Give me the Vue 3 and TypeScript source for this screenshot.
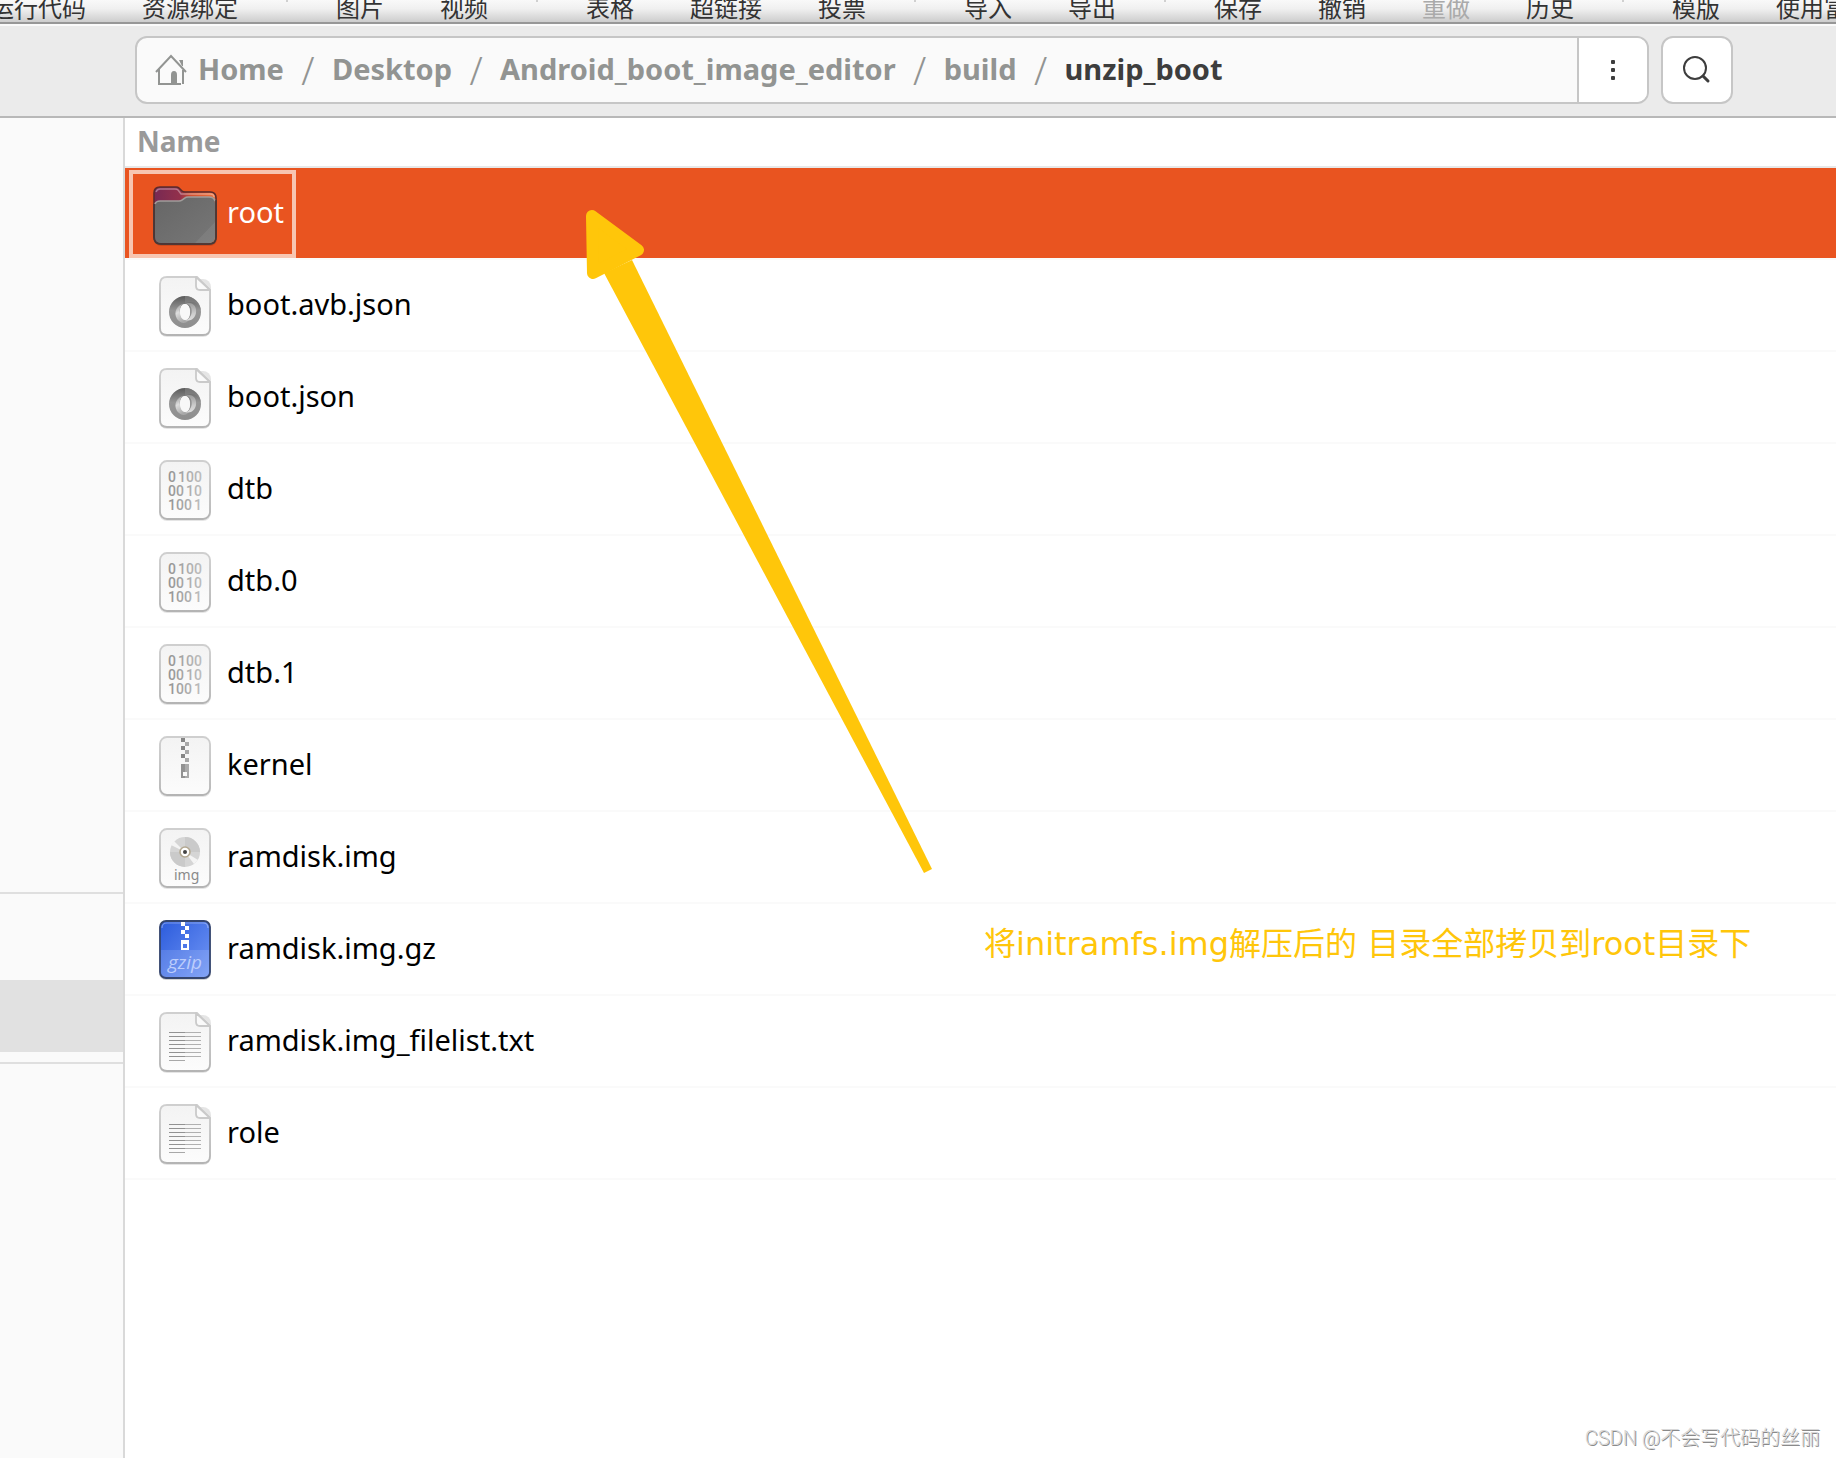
<script setup lang="ts">
type IconKind = 'folder' | 'json' | 'binary' | 'zip' | 'disc' | 'gzip' | 'text'

interface Tool {
  label: string
  disabled?: boolean
}

interface FileEntry {
  name: string
  icon: IconKind
  selected?: boolean
}

const toolGroups: Tool[][] = [
  [{ label: '运行代码' }, { label: '资源绑定' }],
  [{ label: '图片' }, { label: '视频' }],
  [{ label: '表格' }, { label: '超链接' }, { label: '投票' }],
  [{ label: '导入' }, { label: '导出' }],
  [{ label: '保存' }, { label: '撤销' }, { label: '重做', disabled: true }, { label: '历史' }],
  [{ label: '模版' }, { label: '使用富' }],
]

const crumbs: string[] = ['Home', 'Desktop', 'Android_boot_image_editor', 'build', 'unzip_boot']

const files: FileEntry[] = [
  { name: 'root', icon: 'folder', selected: true },
  { name: 'boot.avb.json', icon: 'json' },
  { name: 'boot.json', icon: 'json' },
  { name: 'dtb', icon: 'binary' },
  { name: 'dtb.0', icon: 'binary' },
  { name: 'dtb.1', icon: 'binary' },
  { name: 'kernel', icon: 'zip' },
  { name: 'ramdisk.img', icon: 'disc' },
  { name: 'ramdisk.img.gz', icon: 'gzip' },
  { name: 'ramdisk.img_filelist.txt', icon: 'text' },
  { name: 'role', icon: 'text' },
]

const hasFold = (kind: IconKind): boolean => kind === 'json' || kind === 'text'
const textLines: number[] = [22, 26, 30, 34, 38, 42, 46]
</script>

<template>
  <div class="page">
    <svg class="defs" width="0" height="0" aria-hidden="true">
      <defs>
        <linearGradient id="paper" x1="0" y1="0" x2="0" y2="1">
          <stop offset="0" stop-color="#f3f3f3" />
          <stop offset="1" stop-color="#fcfcfc" />
        </linearGradient>
        <linearGradient id="paper-edge" x1="0" y1="0" x2="0" y2="1">
          <stop offset="0" stop-color="#cfcfcf" />
          <stop offset="1" stop-color="#b4b4b4" />
        </linearGradient>
        <linearGradient id="digits" gradientUnits="userSpaceOnUse" x1="16" y1="0" x2="48" y2="0">
          <stop offset="0" stop-color="#949494" />
          <stop offset="1" stop-color="#bdbdbd" />
        </linearGradient>
        <linearGradient id="swirl-dark" x1="0" y1="0" x2="0" y2="1">
          <stop offset="0" stop-color="#5a5a5a" />
          <stop offset="0.45" stop-color="#969696" />
          <stop offset="1" stop-color="#8e8e8e" />
        </linearGradient>
        <linearGradient id="swirl-left" x1="0" y1="0" x2="0.4" y2="1">
          <stop offset="0" stop-color="#8e8e8e" />
          <stop offset="0.45" stop-color="#dedede" />
          <stop offset="1" stop-color="#a8a8a8" />
        </linearGradient>
        <linearGradient id="swirl-right" x1="0" y1="0" x2="0" y2="1">
          <stop offset="0" stop-color="#9c9c9c" />
          <stop offset="0.6" stop-color="#cdcdcd" />
          <stop offset="1" stop-color="#dedede" />
        </linearGradient>
        <linearGradient id="blue" x1="0" y1="0" x2="1" y2="1">
          <stop offset="0" stop-color="#2b5bdc" />
          <stop offset="1" stop-color="#7398f6" />
        </linearGradient>
        <linearGradient id="folder-back" x1="0" y1="0" x2="1" y2="0">
          <stop offset="0" stop-color="#772953" />
          <stop offset="0.42" stop-color="#93304b" />
          <stop offset="0.6" stop-color="#d2502f" />
          <stop offset="1" stop-color="#f0743f" />
        </linearGradient>
        <linearGradient id="folder-front" x1="0" y1="0" x2="1" y2="1">
          <stop offset="0" stop-color="#666" />
          <stop offset="1" stop-color="#777" />
        </linearGradient>
      </defs>
    </svg>

    <nav class="toolbar" aria-label="Editor">
      <div v-for="(group, g) in toolGroups" :key="g" class="tool-group">
        <button
          v-for="tool in group"
          :key="tool.label"
          type="button"
          class="tool"
          :disabled="tool.disabled"
        >{{ tool.label }}</button>
      </div>
    </nav>

    <header class="header">
      <div class="pathbar">
        <nav class="crumbs" aria-label="Path">
          <svg class="home" viewBox="0 0 32 32" width="32" height="32" aria-hidden="true">
            <path d="M1 18 16 2l15 16M4 15v15h22M28 16v14" fill="none" stroke="#929492" stroke-width="2" />
            <path d="M16 30V21q0-4 3-4t3 4v9zM24 6h4v6h-1z" fill="#929492" />
          </svg>
          <template v-for="(crumb, i) in crumbs" :key="crumb">
            <span v-if="i" class="slash">/</span>
            <a href="#" class="crumb" :class="{ current: i === crumbs.length - 1 }">{{ crumb }}</a>
          </template>
        </nav>
        <button type="button" class="more" aria-label="Menu">
          <svg viewBox="0 0 32 32" width="32" height="32" aria-hidden="true">
            <g fill="#3d3d3d">
              <rect x="14" y="6" width="4" height="4" rx="1" />
              <rect x="14" y="14" width="4" height="4" rx="1" />
              <rect x="14" y="22" width="4" height="4" rx="1" />
            </g>
          </svg>
        </button>
      </div>
      <button type="button" class="search" aria-label="Search">
        <svg viewBox="0 0 32 32" width="32" height="32" aria-hidden="true">
          <circle cx="14" cy="14" r="11" fill="none" stroke="#3d3d3d" stroke-width="2" />
          <path d="m22 22 5 5" stroke="#3d3d3d" stroke-width="3" stroke-linecap="round" />
        </svg>
      </button>
    </header>

    <div class="body">
      <aside class="sidebar">
        <div class="side-top"></div>
        <div class="side-mid"><div class="side-active"></div></div>
      </aside>

      <main class="content">
        <table class="files">
          <thead>
            <tr><th scope="col">Name</th></tr>
          </thead>
          <tbody>
            <tr v-for="file in files" :key="file.name" :class="{ selected: file.selected }">
              <td>
                <div class="entry">
                  <svg class="icon" viewBox="0 0 64 64" width="64" height="64" aria-hidden="true">
                    <template v-if="file.icon === 'folder'">
                      <rect x="1" y="9" width="63" height="55" rx="7" fill="#000" opacity="0.12" />
                      <path d="M1 11q0-6 6-6h16q2 0 3 1l3 3q1 1 3 1h25q6 0 6 6v39q0 7-7 7H8q-7 0-7-7z" fill="url(#folder-back)" stroke="#5b2b2c" stroke-width="1.6" />
                      <path d="M3 10q1-3 4-3h15q2 0 3 1l3 4h29q4 0 4 3" fill="none" stroke="#fff" stroke-opacity="0.35" stroke-width="1.4" />
                      <path d="M2 24q0-5 5-5h19q2 0 3-1l3-2q1-1 3-1h21q6 0 6 6v34q0 6-6 6H8q-6 0-6-6z" fill="url(#folder-front)" />
                      <path d="M62 40v15q0 6-6 6H42z" fill="#fff" opacity="0.07" />
                      <path d="M2 22q1-3 5-3h19q2 0 3-1l3-2q1-1 3-1h21q5 0 6 4" fill="none" stroke="#a09c9a" stroke-width="1.6" />
                      <path d="M1 22v33q0 7 7 7h48q7 0 7-7V18" fill="none" stroke="#473a38" stroke-width="1.6" />
                    </template>

                    <template v-else-if="file.icon === 'gzip'">
                      <rect x="6" y="4" width="52" height="58" rx="7" fill="#000" opacity="0.18" />
                      <rect x="7" y="3" width="50" height="57" rx="6" fill="url(#blue)" stroke="#34456f" stroke-width="1.8" />
                      <path d="M8 32h48v22q0 5-5 5H13q-5 0-5-5z" fill="#fff" opacity="0.13" />
                      <path d="M9 10q0-5 5-5h36q5 0 5 5" fill="none" stroke="#fff" stroke-opacity="0.35" stroke-width="1.2" />
                      <path d="M28 4h4v4h-4zM32 8h4v4h-4zM28 12h4v4h-4zM32 16h4v4h-4z" fill="#fff" />
                      <path d="M28 22h8v10h-8zM30 26v4h4v-4z" fill="#fff" fill-rule="evenodd" />
                      <text x="15" y="51" class="gzip-label">gzip</text>
                    </template>

                    <template v-else>
                      <rect x="6" y="5" width="52" height="58" rx="8" fill="#000" opacity="0.1" />
                      <path v-if="hasFold(file.icon)" d="M14 3h30l13 13v38q0 7-7 7H14q-7 0-7-7V10q0-7 7-7z" fill="url(#paper)" stroke="url(#paper-edge)" stroke-width="1.8" />
                      <path v-if="hasFold(file.icon)" d="M43 3v9q0 4 4 4h10z" fill="#fafafa" stroke="#cacaca" stroke-width="1.8" stroke-linejoin="round" />
                      <rect v-if="!hasFold(file.icon)" x="7" y="3" width="50" height="58" rx="7" fill="url(#paper)" stroke="url(#paper-edge)" stroke-width="1.8" />

                      <template v-if="file.icon === 'json'">
                        <path d="M32 22a16 16 0 1 0 0 32a16 16 0 1 0 0-32zM32 30c3 0 5 3 5 8s-2 8-5 8s-5-3-5-8s2-8 5-8z" fill="url(#swirl-dark)" fill-rule="evenodd" />
                        <path d="M32 30c-4 0-6 4-5 9s4 8 9 7c-4 5-9 3-12-1c-4-7 0-15 8-15z" fill="url(#swirl-left)" />
                        <path d="M32 30c6-1 9 7 5 13c-1 2-3 3-5 3c6 2 10-2 11-7c1-7-4-12-11-9z" fill="url(#swirl-right)" />
                        <path d="M32 22a16 16 0 0 1 16 15c-3-9-9-11-16-7z" fill="#858585" opacity="0.6" />
                        <ellipse cx="32" cy="38" rx="5" ry="8" fill="#f8f8f8" />
                      </template>

                      <g v-else-if="file.icon === 'binary'" class="digits" fill="url(#digits)">
                        <text x="15 25 33 41" y="24">0100</text>
                        <text x="15 23 33 41" y="38">0010</text>
                        <text x="15 23 31 41" y="52">1001</text>
                      </g>

                      <template v-else-if="file.icon === 'zip'">
                        <path d="M28 4h4v4h-4zM28 12h4v4h-4zM28 20h4v4h-4z" fill="#858585" />
                        <path d="M32 8h4v4h-4zM32 16h4v4h-4zM32 24h4v4h-4z" fill="#a8a8a8" />
                        <path d="M28 30h4v14h-4z" fill="#929292" />
                        <path d="M32 30h4v14h-4z" fill="#ababab" />
                        <rect x="30" y="38" width="4" height="4" fill="#fafafa" />
                      </template>

                      <template v-else-if="file.icon === 'disc'">
                        <circle cx="32" cy="26" r="15" fill="#d5d5d5" />
                        <path d="M32 11a15 15 0 0 1 15 15H32zM32 26v15a15 15 0 0 1-15-15z" fill="#cacaca" />
                        <path d="m32 26-14-7 3-4zM32 26l13 8-4 4z" fill="#f4f4f4" />
                        <circle cx="32" cy="26" r="5" fill="#fff" stroke="#b3a891" stroke-width="1.6" />
                        <circle cx="32" cy="26" r="2" fill="#444" />
                        <text x="21" y="54" class="img-label">img</text>
                      </template>

                      <template v-else>
                        <path v-for="y in textLines" :key="y" :d="`M16 ${y}.5h16`" stroke="#929292" />
                        <path v-for="y in textLines" :key="`r${y}`" :d="`M32 ${y}.5h16`" stroke="#b0b0b0" />
                        <path d="M16 50.5h16" stroke="#a8a8a8" />
                      </template>
                    </template>
                  </svg>
                  <span class="name">{{ file.name }}</span>
                </div>
              </td>
            </tr>
          </tbody>
        </table>
      </main>
    </div>

    <svg class="arrow" viewBox="0 0 348 664" width="348" height="664" aria-hidden="true">
      <path d="M6 6 52 40 7 63z" fill="#ffc60a" stroke="#ffc60a" stroke-width="12" stroke-linejoin="round" />
      <path d="M46 50 346 659l-8 4L18 63z" fill="#ffc60a" />
    </svg>
    <p class="note">将initramfs.img解压后的 目录全部拷贝到root目录下</p>
    <p class="watermark">CSDN @不会写代码的丝丽</p>
  </div>
</template>

<style>
body {
  margin: 0;
}
</style>

<style scoped>
.page {
  position: relative;
  display: flex;
  flex-direction: column;
  min-height: 100vh;
  overflow: hidden;
  background: #fff;
  font-family: "Noto Sans", "Noto Sans CJK SC", sans-serif;
}

.defs {
  position: absolute;
}

button {
  margin: 0;
  padding: 0;
  border: 0;
  background: none;
  font: inherit;
  color: inherit;
}

.toolbar {
  display: flex;
  align-items: flex-end;
  height: 22px;
  overflow: hidden;
  border-bottom: 2px solid #979797;
  background: linear-gradient(#f9f9f9, #f0f0f0 40%, #cdcdcd);
}

.tool-group {
  display: flex;
  flex: none;
}

.tool-group:first-child {
  margin-left: -38px;
}

.tool-group + .tool-group::before {
  content: "";
  width: 2px;
  height: 10px;
  margin: 0 20px;
  background: #d0d0d0;
}

.tool {
  flex: none;
  padding: 0 28px;
  font-family: "Noto Sans CJK SC", sans-serif;
  font-size: 24px;
  line-height: 30px;
  color: #333;
}

.tool:disabled {
  color: #aaa;
}

.header {
  display: flex;
  gap: 12px;
  padding: 10px 103px 12px 135px;
  border-top: 2px solid #fafafa;
  border-bottom: 2px solid #b8b8b8;
  background: #ebebeb;
}

.pathbar {
  display: flex;
  flex: 1;
  min-width: 0;
  box-sizing: border-box;
  height: 68px;
  overflow: hidden;
  border: 2px solid #c6c6c6;
  border-radius: 12px;
  background: #fafafa;
}

.crumbs {
  display: flex;
  flex: 1;
  align-items: center;
  min-width: 0;
  padding-left: 18px;
  font-size: 29px;
  font-weight: 700;
  line-height: 40px;
  white-space: nowrap;
}

.home {
  flex: none;
  margin-right: 11px;
}

.crumb {
  padding-bottom: 2px;
  color: #929492;
  text-decoration: none;
}

.crumb.current {
  color: #3d3d3d;
}

.slash {
  width: 48px;
  font-size: 38px;
  font-weight: 300;
  text-align: center;
  color: #929492;
}

.more {
  display: grid;
  place-items: center;
  flex: none;
  width: 70px;
  border-left: 2px solid #c6c6c6;
  background: #fff;
}

.search {
  display: grid;
  place-items: center;
  flex: none;
  box-sizing: border-box;
  width: 72px;
  height: 68px;
  border: 2px solid #c6c6c6;
  border-radius: 12px;
  background: #fff;
}

.body {
  display: flex;
  flex: 1;
}

.sidebar {
  flex: none;
  width: 123px;
  border-right: 2px solid #d9d9d9;
  background: #fafafa;
}

.side-top {
  height: 774px;
  border-bottom: 2px solid #dfdfdf;
}

.side-mid {
  padding: 86px 0 10px;
  border-bottom: 2px solid #dfdfdf;
}

.side-active {
  height: 72px;
  background: #e1e1e1;
}

.content {
  flex: 1;
  min-width: 0;
}

.files {
  width: 100%;
  border-collapse: separate;
  border-spacing: 0;
}

th {
  height: 46px;
  padding: 0 12px 2px;
  border-bottom: 2px solid #e8e8e8;
  font-size: 28px;
  font-weight: 700;
  line-height: 40px;
  text-align: left;
  color: #9a9a9a;
}

td {
  height: 90px;
  padding: 0 4px;
  border-bottom: 2px solid #fafafa;
  font-size: 29px;
  line-height: 40px;
  color: #000;
}

.selected td {
  background: #e95420;
  background-clip: padding-box;
  color: #fff;
}

.entry {
  display: flex;
  align-items: center;
  gap: 10px;
  box-sizing: border-box;
  width: fit-content;
  height: 88px;
  margin-top: 2px;
  padding: 0 8px 0 20px;
  border: 4px solid transparent;
}

.selected .entry {
  border-color: #f7c5b1;
}

.icon {
  flex: none;
}

.name {
  padding-bottom: 4px;
}

.digits {
  font: 500 14px Roboto, sans-serif;
}

.img-label {
  font: 14px "Noto Sans", sans-serif;
  fill: #8a8a8a;
}

.gzip-label {
  font: italic 19px "Open Sans", sans-serif;
  fill: #bccdfc;
}

.arrow {
  position: absolute;
  top: 210px;
  left: 586px;
  pointer-events: none;
}

.note {
  position: absolute;
  top: 924px;
  left: 984px;
  margin: 0;
  font-family: "DejaVu Sans", "Noto Sans CJK SC", sans-serif;
  font-size: 32px;
  line-height: 40px;
  white-space: nowrap;
  color: #ffc60a;
}

.watermark {
  position: absolute;
  right: 16px;
  bottom: 6px;
  margin: 0;
  font-family: Roboto, "Noto Sans CJK SC", sans-serif;
  font-size: 20px;
  font-weight: 300;
  line-height: 28px;
  white-space: nowrap;
  color: #d8d8d8;
  text-shadow: 1px 1px 0 #8a8a8a;
}
</style>
